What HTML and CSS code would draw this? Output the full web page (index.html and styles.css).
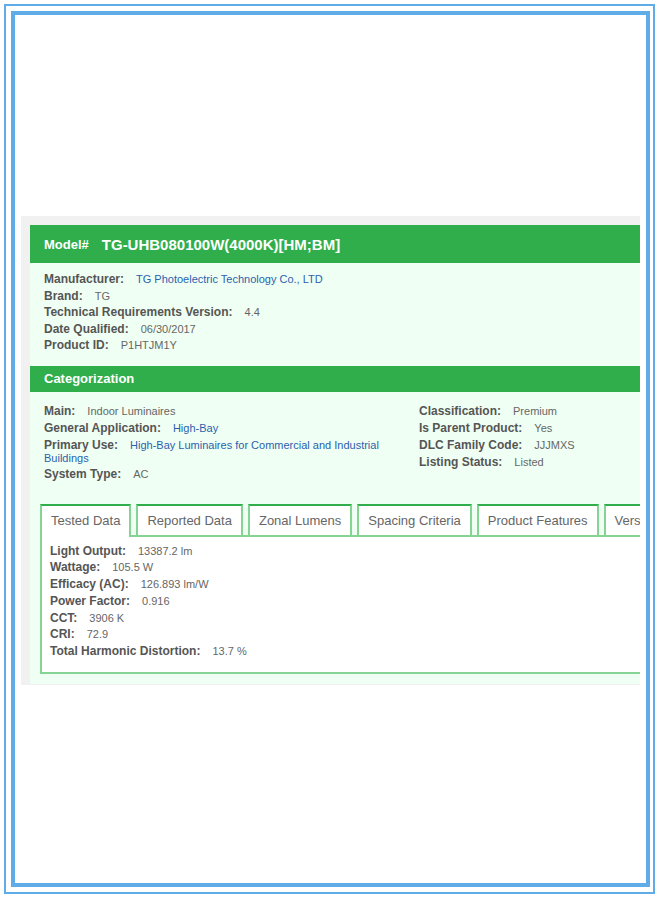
FILE: index.html
```html
<!DOCTYPE html>
<html>
<head>
<meta charset="utf-8">
<link rel="stylesheet" href="styles.css">
</head>
<body>
<div class="frame-outer">
  <div class="frame-inner">
    <div class="clip">
      <div class="wrap">
        <div class="card">
          <div class="head model"><span class="model-label">Model#</span><span class="model-num">TG-UHB080100W(4000K)[HM;BM]</span></div>
          <div class="section info">
            <div class="row"><span class="lbl">Manufacturer:</span><a class="link">TG Photoelectric Technology Co., LTD</a></div>
            <div class="row"><span class="lbl">Brand:</span><span class="val">TG</span></div>
            <div class="row"><span class="lbl">Technical Requirements Version:</span><span class="val">4.4</span></div>
            <div class="row"><span class="lbl">Date Qualified:</span><span class="val">06/30/2017</span></div>
            <div class="row"><span class="lbl">Product ID:</span><span class="val">P1HTJM1Y</span></div>
          </div>
          <div class="head cat">Categorization</div>
          <div class="section catgrid">
            <div class="col">
              <div class="row"><span class="lbl">Main:</span><span class="val">Indoor Luminaires</span></div>
              <div class="row"><span class="lbl">General Application:</span><a class="link">High-Bay</a></div>
              <div class="row"><span class="lbl">Primary Use:</span><a class="link">High-Bay Luminaires for Commercial and Industrial Buildings</a></div>
              <div class="row"><span class="lbl">System Type:</span><span class="val">AC</span></div>
            </div>
            <div class="col">
              <div class="row"><span class="lbl">Classification:</span><span class="val">Premium</span></div>
              <div class="row"><span class="lbl">Is Parent Product:</span><span class="val">Yes</span></div>
              <div class="row"><span class="lbl">DLC Family Code:</span><span class="val">JJJMXS</span></div>
              <div class="row"><span class="lbl">Listing Status:</span><span class="val">Listed</span></div>
            </div>
          </div>
          <div class="tabs-wrap">
            <div class="tabs">
              <div class="tab active">Tested Data</div>
              <div class="tab">Reported Data</div>
              <div class="tab">Zonal Lumens</div>
              <div class="tab">Spacing Criteria</div>
              <div class="tab">Product Features</div>
              <div class="tab">Versions</div>
            </div>
            <div class="panel">
              <div class="row"><span class="lbl">Light Output:</span><span class="val">13387.2 lm</span></div>
              <div class="row"><span class="lbl">Wattage:</span><span class="val">105.5 W</span></div>
              <div class="row"><span class="lbl">Efficacy (AC):</span><span class="val">126.893 lm/W</span></div>
              <div class="row"><span class="lbl">Power Factor:</span><span class="val">0.916</span></div>
              <div class="row"><span class="lbl">CCT:</span><span class="val">3906 K</span></div>
              <div class="row"><span class="lbl">CRI:</span><span class="val">72.9</span></div>
              <div class="row"><span class="lbl">Total Harmonic Distortion:</span><span class="val">13.7 %</span></div>
            </div>
          </div>
        </div>
      </div>
    </div>
  </div>
</div>
</body>
</html>
```
FILE: styles.css
```css
html, body {
  margin: 0;
  padding: 0;
  background: #ffffff;
}
body {
  padding: 4px;
  font-family: "Liberation Sans", Arial, sans-serif;
}
.frame-outer {
  box-sizing: border-box;
  width: 651px;
  height: 890px;
  border: 2px solid #5eade8;
  padding: 5px;
}
.frame-inner {
  box-sizing: border-box;
  width: 639px;
  height: 876px;
  border: 4px solid #5eade8;
  padding: 201px 6px 0 6px;
}
.clip {
  overflow: hidden;
}
.wrap {
  width: 800px;
  background: #f1f1f1;
  padding: 9px 0 1px 9px;
}
.card {
  background: #f0fff3;
}
.head {
  background: #2fae4b;
  color: #ffffff;
  font-weight: bold;
  padding: 0 14px;
  display: flex;
  align-items: center;
}
.model {
  height: 38px;
}
.model-label {
  font-size: 13px;
  margin-right: 13px;
}
.model-num {
  font-size: 15px;
}
.cat {
  height: 26px;
  font-size: 13px;
}
.section {
  padding: 9px 14px 11px 14px;
}
.row {
  font-size: 11px;
  color: #666666;
  margin-bottom: 2.5px;
}
.catgrid .row {
  margin-bottom: 3px;
}
.panel .row {
  margin-bottom: 2.8px;
}
.lbl {
  font-size: 12px;
  font-weight: bold;
  color: #555555;
  margin-right: 12px;
}
.val {
  color: #666666;
}
.link {
  color: #2a5fae;
}
.catgrid {
  display: grid;
  grid-template-columns: 375px 1fr;
  padding-top: 12px;
  padding-bottom: 20px;
}
.tabs-wrap {
  padding: 0 0 10px 10px;
}
.tabs {
  display: flex;
  gap: 5px;
}
.tab {
  height: 29px;
  line-height: 30px;
  padding: 0 9px;
  font-size: 13px;
  color: #666666;
  background: #ffffff;
  border: 2px solid #86d494;
  border-top: 2px solid #2fae4b;
  border-bottom: none;
  white-space: nowrap;
}
.tab.active {
  position: relative;
  margin-bottom: -2px;
  height: 31px;
}
.panel {
  background: #ffffff;
  border: 2px solid #86d494;
  padding: 7px 8px 11px 8px;
}
```
